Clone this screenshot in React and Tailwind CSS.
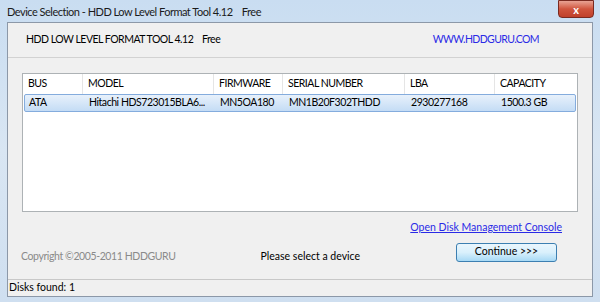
import React from 'react';

const cols = [
  { label: 'BUS', w: 'w-[60px]' },
  { label: 'MODEL', w: 'w-[131px]' },
  { label: 'FIRMWARE', w: 'w-[69px]' },
  { label: 'SERIAL NUMBER', w: 'w-[122px]' },
  { label: 'LBA', w: 'w-[90px]' },
  { label: 'CAPACITY', w: 'flex-1' },
];

const row = ['ATA', 'Hitachi HDS723015BLA6...', 'MN5OA180', 'MN1B20F302THDD', '2930277168', '1500.3 GB'];

export default function App() {
  return (
    <div className="w-[600px] h-[302px] overflow-hidden bg-gradient-to-b from-[#c9ddf1] via-[#d9e6f3] to-[#cfdff0] font-['Lato',sans-serif] text-[10.5px] text-black relative">
      {/* title bar */}
      <div className="h-[22px] flex items-center pl-[7px] relative">
        <span className="text-[#1b1b1b] text-[11px] tracking-[-0.5px] leading-none whitespace-pre">Device Selection - HDD Low Level Format Tool 4.12    Free</span>
        <div className="absolute right-[6px] top-0 w-[36px] h-[18px] rounded-b-[4px] border border-[#7a2a20] bg-gradient-to-b from-[#e8a293] via-[#d0543d] to-[#c0402a] flex items-center justify-center">
          <span className="text-white text-[11px] font-bold leading-none">x</span>
        </div>
      </div>

      {/* client */}
      <div className="mx-[7px] h-[275px] bg-[#f0f0f0] border border-[#8c98a8] flex flex-col">
        <div className="h-[35px] border-b border-[#d2d2d2] flex items-center px-[18px] shrink-0">
          <span className="whitespace-pre tracking-[-0.5px]">HDD LOW LEVEL FORMAT TOOL 4.12    Free</span>
          <span className="ml-auto mr-[35px] text-[#2a2ae6] tracking-[-0.6px]">WWW.HDDGURU.COM</span>
        </div>

        <div className="flex-1 flex flex-col px-[14px] pt-[15px]">
          <div className="h-[139px] bg-white border border-[#adb2b5]">
            <div className="flex h-[20px] items-center tracking-[-0.5px]">
              {cols.map((c, i) => (
                <div key={c.label} className={`${c.w} shrink-0 h-full flex items-center pl-[5px] ${i < cols.length - 1 ? 'border-r border-[#e5e5e5]' : ''}`}>
                  {c.label}
                </div>
              ))}
            </div>
            <div className="flex h-[18px] items-center mx-[1px] rounded-[2px] border border-[#84acdd] bg-gradient-to-b from-[#e8f1fb] to-[#c4dcf5] tracking-[-0.45px]">
              {row.map((v, i) => (
                <div key={i} className={`${cols[i].w} shrink-0 pl-[4px] whitespace-nowrap overflow-hidden`}>
                  {v}
                </div>
              ))}
            </div>
          </div>

          <div className="flex justify-end mt-[8px] pr-[16px]">
            <span className="text-[#2a2ae6] underline">Open Disk Management Console</span>
          </div>

          <div className="flex items-center mt-[4px]">
            <span className="text-[#8a8a8a] ml-[-1px] mt-[9px] tracking-[-0.4px]">Copyright ©2005-2011 HDDGURU</span>
            <span className="ml-[85px] mt-[9px]">Please select a device</span>
            <div className="ml-auto mr-[21px] w-[101px] h-[19px] border border-[#3c7fb1] rounded-[3px] bg-gradient-to-b from-[#eaf6fd] via-[#d9f0fc] to-[#a7d9f5] flex items-center justify-center">
              Continue &gt;&gt;&gt;
            </div>
          </div>
        </div>

        <div className="h-[17px] border-t border-[#c8c8c8] flex items-center pl-[1px] shrink-0">
          Disks found: 1
        </div>
      </div>
    </div>
  );
}
